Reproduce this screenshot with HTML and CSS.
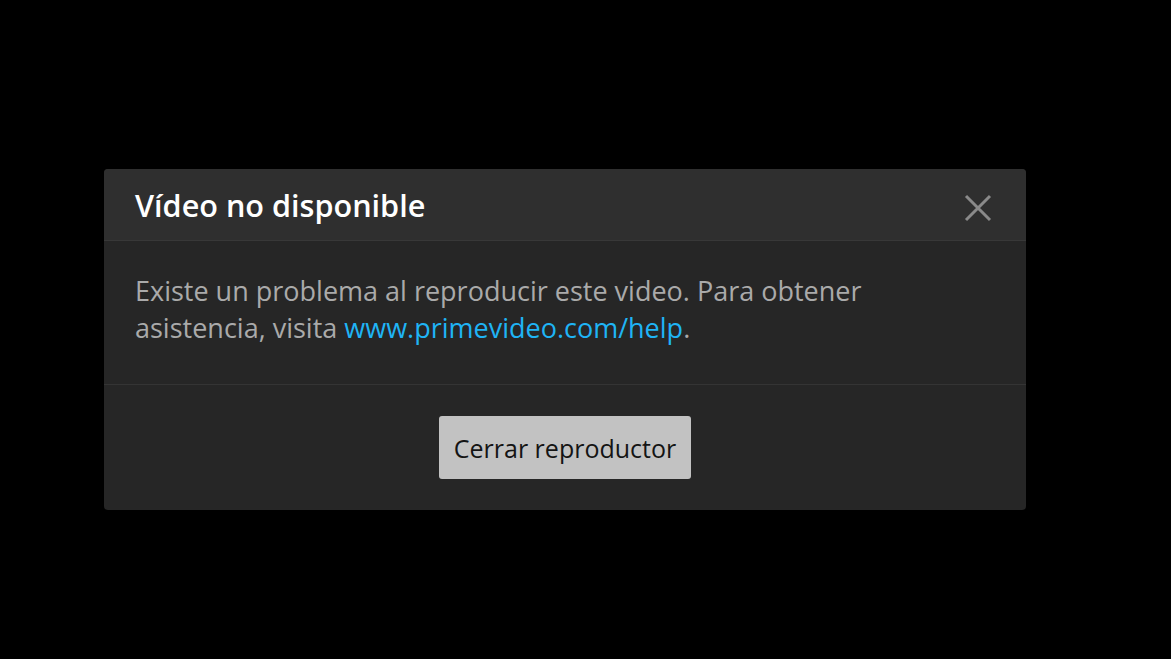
FILE: index.html
```html
<!DOCTYPE html>
<html lang="es">
<head>
<meta charset="utf-8">
<link rel="stylesheet" href="styles.css">
</head>
<body>
<div class="stage">
  <div class="dialog">
    <div class="dialog-header">
      <h1 class="dialog-title">Vídeo no disponible</h1>
      <button class="close" aria-label="Cerrar">
        <svg width="28" height="28" viewBox="0 0 28 28"><path d="M2 2 L26 26 M26 2 L2 26" stroke="#8a8a8a" stroke-width="3" fill="none"/></svg>
      </button>
    </div>
    <div class="dialog-body">
      <p class="message">Existe un problema al reproducir este video. Para obtener asistencia, visita <a class="link" href="#">www.primevideo.com/help</a>.</p>
    </div>
    <div class="dialog-footer">
      <button class="primary">Cerrar reproductor</button>
    </div>
  </div>
</div>
</body>
</html>
```
FILE: styles.css
```css
html, body { margin: 0; padding: 0; background: #000; }
body { font-family: "Open Sans", "Lato", sans-serif; }
.stage { width: 1171px; height: 659px; padding-top: 169px; padding-left: 104px; box-sizing: border-box; }
.dialog { width: 922px; background: #262626; border-radius: 4px; overflow: hidden; }
.dialog-header { height: 72px; background: #2f2f2f; border-bottom: 1px solid #383838; display: flex; align-items: center; justify-content: space-between; padding: 0 34px 0 31px; box-sizing: border-box; }
.dialog-title { margin: 0; color: #fff; font-size: 30.6px; font-weight: 600; line-height: 36px; }
.close { background: none; border: 0; padding: 0; width: 28px; height: 28px; display: block; margin-top: 7px; }
.close svg { display: block; }
.dialog-body { padding: 31px 31px 38px; border-bottom: 1px solid #343434; }
.message { margin: 0; color: #aaaaaa; font-size: 27px; line-height: 37px; max-width: 760px; }
.link { color: #1fb4f5; text-decoration: none; }
.dialog-footer { display: flex; justify-content: center; padding: 31px 0 31px; }
.primary { width: 252px; height: 63px; background: #c2c2c2; border: 0; border-radius: 3px; color: #141414; font-family: inherit; font-size: 25px; padding: 0; }
```
